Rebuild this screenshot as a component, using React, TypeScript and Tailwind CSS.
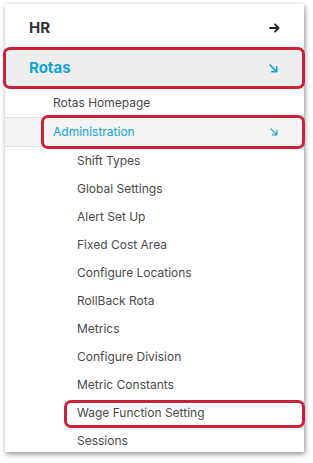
import React from 'react';

const items = [
  'Shift Types',
  'Global Settings',
  'Alert Set Up',
  'Fixed Cost Area',
  'Configure Locations',
  'RollBack Rota',
  'Metrics',
  'Configure Division',
  'Metric Constants',
  'Wage Function Setting',
  'Sessions',
];

const ArrowRight = () => (
  <svg width="11" height="10" viewBox="0 0 11 10" fill="none" stroke="#222" strokeWidth="1.8" strokeLinecap="round" strokeLinejoin="round">
    <path d="M1 5h8.5M6 1.3L9.6 5 6 8.7" />
  </svg>
);

const ArrowDown = ({ size = 9, sw = 1.8 }: { size?: number; sw?: number }) => (
  <svg width={size} height={size} viewBox="0 0 10 10" fill="none" stroke="#11a3d2" strokeWidth={sw} strokeLinecap="round" strokeLinejoin="round">
    <path d="M1.2 1.2L8.6 8.6M3 8.6h5.6V3" />
  </svg>
);

// red annotation frame laid over a row
const Mark = ({ className }: { className: string }) => (
  <div className={`pointer-events-none absolute border-[3px] border-[#c8213a] rounded-[7px] ${className}`} />
);

export default function App() {
  return (
    <div className="w-[313px] h-[463px] bg-white pt-[4px] pl-[5px]" style={{ fontFamily: 'Inter, "Noto Sans", sans-serif' }}>
      <div className="w-[299px] h-[448px] bg-white shadow-[1px_2px_5px_rgba(0,0,0,0.45)] pt-[8px]">
        {/* HR */}
        <div className="h-[32px] flex items-center justify-between pl-[24px] pr-[24px]">
          <span className="text-[15px] font-bold text-[#333]">HR</span>
          <ArrowRight />
        </div>

        {/* Rotas */}
        <div className="relative mt-[6px]">
          <div className="h-[36px] bg-[#eeeeee] flex items-center justify-between pl-[24px] pr-[26px]">
            <span className="text-[15px] font-bold text-[#11a3d2]">Rotas</span>
            <ArrowDown />
          </div>
          <Mark className="-left-[2px] -right-[1px] -top-[3px] -bottom-[3px]" />
        </div>

        <div className="h-[28px] mt-[3px] flex items-center pl-[48px] text-[12px] text-[#4a4a4a]">Rotas Homepage</div>

        {/* Administration */}
        <div className="relative">
          <div className="h-[30px] bg-[#f4f4f4] border-y border-dotted border-[#cfcfcf] flex items-center justify-between pl-[48px] pr-[26px]">
            <span className="text-[12px] text-[#11a3d2]">Administration</span>
            <ArrowDown size={8} sw={1.4} />
          </div>
          <Mark className="left-[36px] -right-[1px] -top-[2px] -bottom-[2px]" />
        </div>

        {items.map(label => (
          <div key={label} className="relative h-[28px] flex items-center pl-[72px] text-[12px] text-[#4a4a4a]">
            {label}
            {label === 'Wage Function Setting' && <Mark className="left-[59px] -right-[1px] top-[1px] bottom-[-1px]" />}
          </div>
        ))}
      </div>
    </div>
  );
}
